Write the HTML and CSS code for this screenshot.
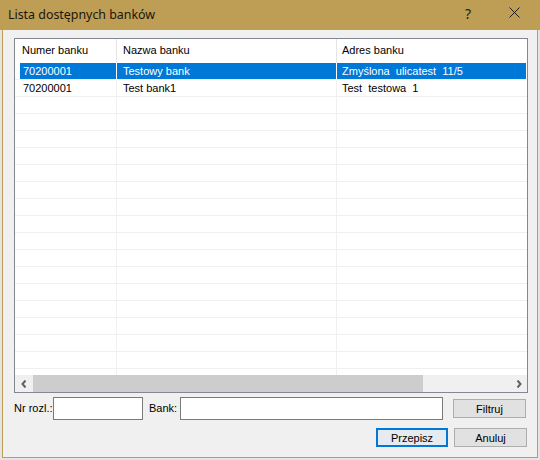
FILE: index.html
```html
<!DOCTYPE html>
<html lang="pl">
<head>
<meta charset="utf-8">
<title>Lista dostępnych banków</title>
<link rel="stylesheet" href="styles.css">
</head>
<body>
<div class="win">
  <div class="titlebar">
    <span class="title">Lista dostępnych banków</span>
    <span class="tbtn help">?</span>
    <span class="tbtn close">
      <svg width="11" height="11" viewBox="0 0 11 11"><path d="M0.5 0.5 L10.5 10.5 M10.5 0.5 L0.5 10.5" stroke="#1a1a1a" stroke-width="1" fill="none"/></svg>
    </span>
  </div>
  <div class="client">
    <div class="list">
      <div class="lhead">
        <div class="c c1">Numer banku</div>
        <div class="c c2">Nazwa banku</div>
        <div class="c c3">Adres banku</div>
      </div>
      <div class="lbody">
        <div class="row sel"><div class="c c1"><span>70200001</span></div><div class="c c2">Testowy bank</div><div class="c c3">Zmyślona  ulicatest  11/5</div></div>
        <div class="row"><div class="c c1"><span>70200001</span></div><div class="c c2">Test bank1</div><div class="c c3">Test  testowa  1</div></div>
        <div class="row"><div class="c c1"></div><div class="c c2"></div><div class="c c3"></div></div>
        <div class="row"><div class="c c1"></div><div class="c c2"></div><div class="c c3"></div></div>
        <div class="row"><div class="c c1"></div><div class="c c2"></div><div class="c c3"></div></div>
        <div class="row"><div class="c c1"></div><div class="c c2"></div><div class="c c3"></div></div>
        <div class="row"><div class="c c1"></div><div class="c c2"></div><div class="c c3"></div></div>
        <div class="row"><div class="c c1"></div><div class="c c2"></div><div class="c c3"></div></div>
        <div class="row"><div class="c c1"></div><div class="c c2"></div><div class="c c3"></div></div>
        <div class="row"><div class="c c1"></div><div class="c c2"></div><div class="c c3"></div></div>
        <div class="row"><div class="c c1"></div><div class="c c2"></div><div class="c c3"></div></div>
        <div class="row"><div class="c c1"></div><div class="c c2"></div><div class="c c3"></div></div>
        <div class="row"><div class="c c1"></div><div class="c c2"></div><div class="c c3"></div></div>
        <div class="row"><div class="c c1"></div><div class="c c2"></div><div class="c c3"></div></div>
        <div class="row"><div class="c c1"></div><div class="c c2"></div><div class="c c3"></div></div>
        <div class="row"><div class="c c1"></div><div class="c c2"></div><div class="c c3"></div></div>
        <div class="row"><div class="c c1"></div><div class="c c2"></div><div class="c c3"></div></div>
        <div class="row"><div class="c c1"></div><div class="c c2"></div><div class="c c3"></div></div>
        <div class="row"><div class="c c1"></div><div class="c c2"></div><div class="c c3"></div></div>
        <div class="row"><div class="c c1"></div><div class="c c2"></div><div class="c c3"></div></div>
      </div>
      <div class="hscroll">
        <div class="arrow">
          <svg width="6" height="8" viewBox="0 0 6 8"><path d="M4.5 0.5 L1.5 4 L4.5 7.5" stroke="#606060" stroke-width="2" fill="none"/></svg>
        </div>
        <div class="thumb"></div>
        <div class="track"></div>
        <div class="arrow">
          <svg width="6" height="8" viewBox="0 0 6 8"><path d="M1.5 0.5 L4.5 4 L1.5 7.5" stroke="#606060" stroke-width="2" fill="none"/></svg>
        </div>
      </div>
    </div>
    <div class="filter">
      <label class="lbl lbl-nr">Nr rozl.:</label>
      <div class="input in-nr"></div>
      <label class="lbl lbl-bank">Bank:</label>
      <div class="input in-bank"></div>
      <button class="btn btn-filter">Filtruj</button>
    </div>
    <div class="actions">
      <button class="btn btn-default">Przepisz</button>
      <button class="btn">Anuluj</button>
    </div>
  </div>
</div>
</body>
</html>
```
FILE: styles.css
```css
html, body {
  margin: 0;
  padding: 0;
}
body {
  width: 540px;
  height: 460px;
  overflow: hidden;
  background: linear-gradient(#BE9D54 0, #BE9D54 30px, #e4e4e4 30px);
  font-family: "Liberation Sans", Arial, sans-serif;
  font-size: 11px;
  color: #000;
}
.win {
  margin-left: 2px;
  width: 536px;
  height: 458px;
  box-sizing: border-box;
  border: 1px solid #BE9D54;
  border-top: none;
  background: #F0F0F0;
  display: flex;
  flex-direction: column;
}
.titlebar {
  height: 30px;
  background: #BE9D54;
  display: flex;
  align-items: center;
  flex: none;
}
.title {
  flex: 1;
  padding-left: 5px;
  font-family: "Noto Sans", "Open Sans", sans-serif;
  font-size: 12.4px;
  color: #1b160c;
  padding-bottom: 2px;
}
.tbtn {
  width: 46px;
  height: 30px;
  display: flex;
  align-items: center;
  justify-content: center;
  color: #1a1a1a;
}
.help {
  font-family: "Noto Sans", sans-serif;
  font-size: 14px;
  padding-bottom: 4px;
  box-sizing: border-box;
}
.close svg {
  margin-bottom: 5px;
}
.client {
  flex: 1;
  padding: 8px 9px 0 11px;
  display: flex;
  flex-direction: column;
}
.list {
  height: 355px;
  box-sizing: border-box;
  border: 1px solid #828790;
  background: #fff;
  display: flex;
  flex-direction: column;
}
.lhead {
  height: 24px;
  display: grid;
  grid-template-columns: 102px 220px 1fr;
  flex: none;
}
.lhead .c {
  border-right: 1px solid #E5E5E5;
  line-height: 23px;
  padding-left: 6px;
}
.lhead .c1 { padding-left: 7px; }
.lhead .c3 { border-right: none; padding-left: 5px; }
.lbody {
  flex: 1;
  overflow: hidden;
}
.row {
  display: grid;
  grid-template-columns: 102px 220px 1fr;
  height: 17px;
  box-sizing: border-box;
  border-bottom: 1px solid #F0F0F0;
}
.row .c {
  line-height: 16px;
  white-space: pre;
  border-right: 1px solid #F0F0F0;
  padding-left: 6px;
}
.row .c1 {
  padding-left: 0;
}
.row .c1 span {
  display: block;
  margin-left: 5px;
  padding-left: 3px;
  height: 16px;
}
.row .c3 {
  border-right: none;
  padding-left: 5px;
  margin-right: 1px;
}
.row.sel .c2,
.row.sel .c3,
.row.sel .c1 span {
  background: #0078D7;
  color: #fff;
}
.row.sel .c1 {
  border-right-color: #fff;
}
.row.sel .c2 {
  border-right-color: #fff;
}
.hscroll {
  height: 17px;
  flex: none;
  display: flex;
  background: #F0F0F0;
}
.arrow {
  width: 17px;
  display: flex;
  align-items: center;
  justify-content: center;
}
.thumb {
  width: 390px;
  background: #CDCDCD;
  margin-left: 1px;
}
.track {
  flex: 1;
}
.filter {
  margin-top: 4px;
  height: 23px;
  display: flex;
  align-items: center;
}
.lbl {
  line-height: 23px;
}
.lbl-nr { width: 39px; }
.lbl-bank { width: 31px; margin-left: 6px; }
.input {
  height: 23px;
  box-sizing: border-box;
  border: 1px solid #7A7A7A;
  background: #fff;
}
.in-nr { width: 90px; }
.in-bank { width: 263px; }
.btn {
  width: 73px;
  height: 19px;
  box-sizing: border-box;
  border: 1px solid #ADADAD;
  background: #E1E1E1;
  font-family: "Liberation Sans", Arial, sans-serif;
  font-size: 11px;
  color: #000;
  padding: 0;
  margin: 0;
  line-height: 16px;
}
.btn-filter { margin-left: 10px; }
.actions {
  margin-top: 8px;
  display: flex;
  justify-content: flex-end;
  gap: 6px;
  padding-right: 1px;
}
.btn-default {
  width: 72px;
  border: 2px solid #0078D7;
  background: #E5EBF1;
  line-height: 14px;
}
```
